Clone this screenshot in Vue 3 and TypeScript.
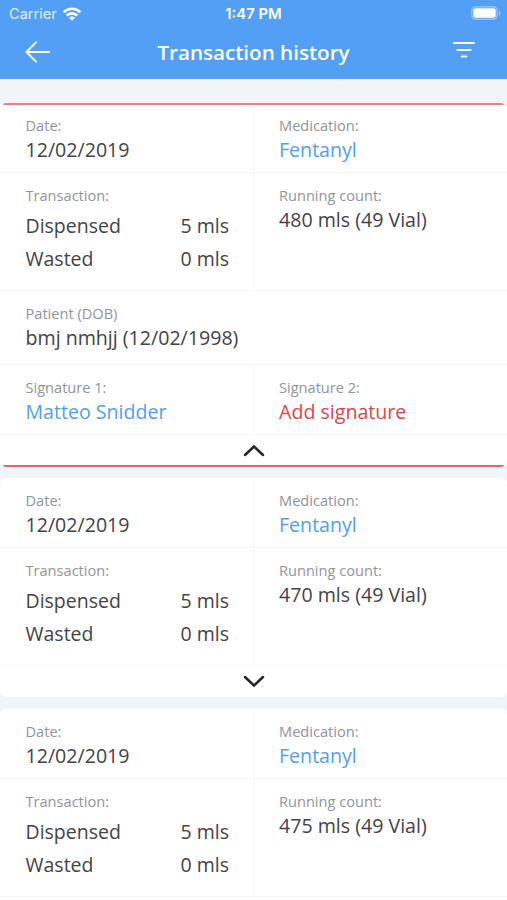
<script setup lang="ts">
interface Transaction {
  id: number
  date: string
  medication: string
  dispensed: string
  wasted: string
  count: string
  flagged: boolean
  expanded: boolean
  patient?: string
  signature?: string
}

const transactions: Transaction[] = [
  {
    id: 1, date: '12/02/2019', medication: 'Fentanyl', dispensed: '5 mls', wasted: '0 mls',
    count: '480 mls (49 Vial)', flagged: true, expanded: true,
    patient: 'bmj nmhjj (12/02/1998)', signature: 'Matteo Snidder',
  },
  {
    id: 2, date: '12/02/2019', medication: 'Fentanyl', dispensed: '5 mls', wasted: '0 mls',
    count: '470 mls (49 Vial)', flagged: false, expanded: false,
  },
  {
    id: 3, date: '12/02/2019', medication: 'Fentanyl', dispensed: '5 mls', wasted: '0 mls',
    count: '475 mls (49 Vial)', flagged: false, expanded: false,
  },
]
</script>

<template>
  <div class="screen">
    <header class="header">
      <div class="status">
        <div class="carrier">
          <span>Carrier</span>
          <svg class="wifi" width="20" height="14" viewBox="0 0 20 14" fill="none" stroke="#fff" stroke-width="2.7">
            <path d="M1.6 5.2A12 12 0 0 1 18.4 5.2" />
            <path d="M4.7 8.5A7.6 7.6 0 0 1 15.3 8.5" />
            <path d="M10 13.8L6.9 10.8A4.4 4.4 0 0 1 13.1 10.8Z" fill="#fff" stroke="none" />
          </svg>
        </div>
        <div class="time">1:47 PM</div>
        <div class="battery">
          <svg width="30" height="15" viewBox="0 0 30 15">
            <rect x="0.8" y="0.8" width="25.4" height="12.4" rx="3.6" fill="none" stroke="#fff" stroke-opacity="0.45" stroke-width="1.2" />
            <rect x="2.3" y="2.3" width="22.4" height="9.4" rx="2" fill="#fff" />
            <path d="M28 4.8Q29.6 5.6 29.6 7T28 9.2Z" fill="#fff" fill-opacity="0.5" />
          </svg>
        </div>
      </div>
      <div class="nav">
        <button class="icon-button" aria-label="Back">
          <svg width="26" height="22" viewBox="0 0 26 22" fill="none" stroke="#fff" stroke-width="2" stroke-linecap="round" stroke-linejoin="round">
            <path d="M11 1.4L1.5 11L11 20.6M1.5 11H24.2" />
          </svg>
        </button>
        <h1 class="title">Transaction history</h1>
        <button class="icon-button end" aria-label="Filter">
          <svg width="24" height="18" viewBox="0 0 24 18" stroke="#fff" stroke-width="2" stroke-linecap="round">
            <path d="M2 2H22M5.5 9H18.5M9.6 15.5H14.4" />
          </svg>
        </button>
      </div>
    </header>

    <main class="list">
      <article v-for="item in transactions" :key="item.id" class="card" :class="{ flagged: item.flagged }">
        <div v-if="item.flagged" class="edge"></div>
        <div class="row summary">
          <div class="cell">
            <div class="label">Date:</div>
            <div class="value">{{ item.date }}</div>
          </div>
          <div class="cell">
            <div class="label">Medication:</div>
            <div class="value link">{{ item.medication }}</div>
          </div>
        </div>
        <div class="row amounts">
          <div class="cell">
            <div class="label">Transaction:</div>
            <div class="amount first"><span>Dispensed</span><span>{{ item.dispensed }}</span></div>
            <div class="amount"><span>Wasted</span><span>{{ item.wasted }}</span></div>
          </div>
          <div class="cell">
            <div class="label">Running count:</div>
            <div class="value">{{ item.count }}</div>
          </div>
        </div>
        <template v-if="item.expanded">
          <div class="row patient">
            <div class="cell">
              <div class="label">Patient (DOB)</div>
              <div class="value">{{ item.patient }}</div>
            </div>
          </div>
          <div class="row signatures">
            <div class="cell">
              <div class="label">Signature 1:</div>
              <div class="value link">{{ item.signature }}</div>
            </div>
            <div class="cell">
              <div class="label">Signature 2:</div>
              <div class="value danger">Add signature</div>
            </div>
          </div>
        </template>
        <div class="toggle">
          <svg width="22" height="13" viewBox="0 0 22 13" fill="none" stroke="#25252b" stroke-width="2.5" stroke-linecap="round">
            <path :d="item.expanded ? 'M2 11L11 2.5L20 11' : 'M2 2L11 10.5L20 2'" />
          </svg>
        </div>
        <div v-if="item.flagged" class="edge bottom"></div>
      </article>
    </main>
  </div>
</template>

<style>
body {
  margin: 0;
  background: #f2f5f7;
}
</style>

<style scoped>
.screen {
  width: 507px;
  height: 900px;
  overflow: hidden;
  background: #f2f5f7;
  font-family: "Open Sans", "Noto Sans", sans-serif;
  color: #434347;
}
.header {
  box-sizing: border-box;
  height: 79px;
  background: #529ff5;
  color: #fff;
}
.status {
  display: grid;
  grid-template-columns: 1fr auto 1fr;
  align-items: center;
  height: 27px;
  padding: 0 6px 0 9px;
  font-family: Inter, sans-serif;
  font-size: 14.6px;
}
.carrier {
  display: flex;
  align-items: center;
  gap: 5px;
  color: #e3f0ff;
}
.time {
  font-weight: 600;
  font-size: 14.8px;
  margin-right: 3px;
}
.battery {
  display: flex;
  justify-content: flex-end;
}
.nav {
  display: grid;
  grid-template-columns: 1fr auto 1fr;
  align-items: center;
  height: 50px;
  padding: 0 25px;
}
.icon-button {
  display: flex;
  padding: 0;
  border: 0;
  background: none;
}
.end {
  justify-content: flex-end;
  padding: 0 6px 5px 0;
}
.title {
  margin: 0;
  font-size: 20.6px;
  font-weight: 600;
  line-height: 28px;
}
.list {
  display: flex;
  flex-direction: column;
  gap: 12px;
  padding-top: 24px;
}
.card {
  flex: none;
  overflow: hidden;
  border-radius: 6px;
  background: #fff;
}
.card.flagged {
  margin-bottom: -1px;
}
.edge {
  height: 2px;
  margin: 0 3px;
  border-radius: 1px;
  background: #ec8085;
}
.edge.bottom {
  margin-top: -1px;
  background: #e66468;
}
.row {
  display: grid;
  grid-template-columns: 253px 1fr;
  box-sizing: border-box;
  border-bottom: 1px solid #f6f7f8;
}
.cell {
  box-sizing: border-box;
  padding: 13px 24px 0 25.5px;
}
.cell + .cell {
  padding-left: 25px;
  border-left: 1px solid #f7f8f9;
}
.summary {
  height: 70px;
}
.flagged .summary {
  height: 68px;
}
.flagged .summary .cell {
  padding-top: 11px;
}
.amounts {
  height: 118px;
}
.patient {
  grid-template-columns: 1fr;
  height: 74px;
}
.signatures {
  height: 70px;
}
.label {
  margin-bottom: 2px;
  font-size: 14.6px;
  line-height: 18px;
  color: #929498;
}
.value {
  font-size: 19.6px;
  line-height: 28px;
  white-space: nowrap;
}
.link {
  color: #559eef;
}
.danger {
  color: #e3434b;
}
.amount {
  display: flex;
  justify-content: space-between;
  font-size: 19.5px;
  line-height: 33px;
}
.first {
  padding-top: 3px;
}
.toggle {
  display: flex;
  align-items: center;
  justify-content: center;
  height: 31px;
}
</style>
